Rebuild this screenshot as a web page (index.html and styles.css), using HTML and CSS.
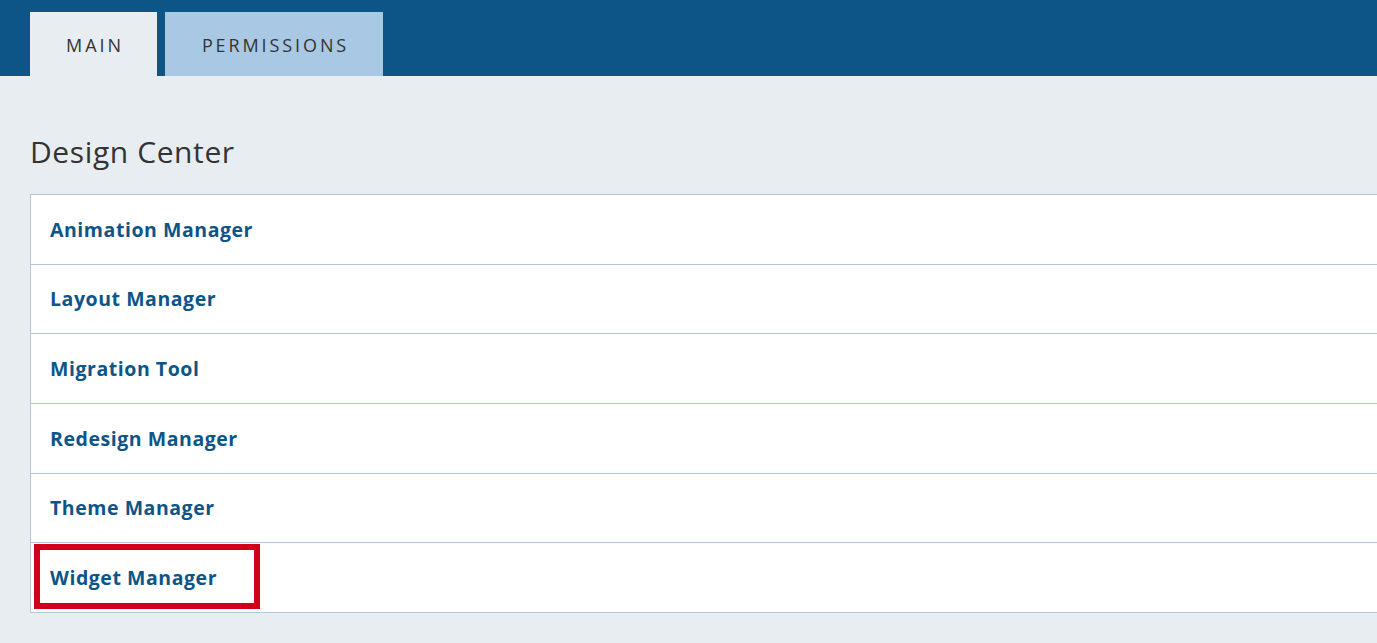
FILE: index.html
```html
<!DOCTYPE html>
<html lang="en">
<head>
<meta charset="utf-8">
<title>Design Center</title>
<link rel="stylesheet" href="styles.css">
</head>
<body>
<header class="topbar">
  <nav class="tabs">
    <a class="tab tab-active" href="#">MAIN</a>
    <a class="tab tab-inactive" href="#">PERMISSIONS</a>
  </nav>
</header>
<main class="content">
  <h1 class="title">Design Center</h1>
  <ul class="list">
    <li class="row"><a href="#">Animation Manager</a></li>
    <li class="row"><a href="#">Layout Manager</a></li>
    <li class="row"><a href="#">Migration Tool</a></li>
    <li class="row"><a href="#">Redesign Manager</a></li>
    <li class="row"><a href="#">Theme Manager</a></li>
    <li class="row row-highlight"><a href="#">Widget Manager</a><span class="highlight"></span></li>
  </ul>
</main>
</body>
</html>
```
FILE: styles.css
```css
html, body {
  margin: 0;
  padding: 0;
  overflow: hidden;
}
body {
  background: #e8edf2;
  font-family: "Open Sans", "Lato", sans-serif;
  width: 1377px;
  height: 643px;
}
.topbar {
  background: #0d5587;
  height: 76px;
  box-sizing: border-box;
  padding: 12px 0 0 30px;
}
.tabs {
  display: flex;
  gap: 8px;
  height: 64px;
}
.tab {
  display: flex;
  align-items: center;
  justify-content: center;
  text-decoration: none;
  color: #333;
  font-size: 18px;
  letter-spacing: 2.9px;
  height: 64px;
  box-sizing: border-box;
  padding-top: 2px;
  padding-left: 3px;
}
.tab-active {
  background: #e8edf2;
  width: 127px;
}
.tab-inactive {
  background: #a9c8e4;
  width: 218px;
}
.content {
  padding: 0 0 0 30px;
}
.title {
  margin: 0;
  padding-top: 58px;
  height: 118px;
  box-sizing: border-box;
  font-size: 30px;
  font-weight: 400;
  letter-spacing: 0.6px;
  color: #333;
  line-height: 36px;
}
.list {
  list-style: none;
  margin: 0 -40px 0 0;
  padding: 0;
  background: #fff;
  border: 1px solid #b3c6da;
}
.row {
  position: relative;
  height: 68.67px;
  display: flex;
  align-items: center;
  padding-left: 19px;
  border-top: 1px solid #b3c6da;
}
.row:first-child {
  border-top: none;
}
.row a {
  color: #0d5587;
  font-weight: 700;
  font-size: 19.5px;
  letter-spacing: 0.55px;
  text-decoration: none;
}
.highlight {
  position: absolute;
  left: 3px;
  top: 1px;
  width: 226px;
  height: 65px;
  box-sizing: border-box;
  border: 6px solid #d0021b;
}
```
